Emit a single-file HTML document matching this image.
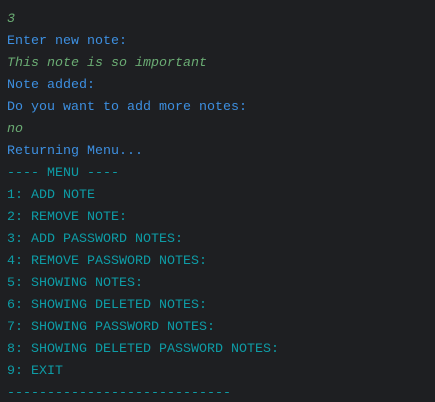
<!DOCTYPE html>
<html><head><meta charset="utf-8"><style>
html,body{margin:0;padding:0;background:#1e1f22;width:435px;height:402px;overflow:hidden}
pre{margin:0;padding:9px 0 0 7px;font-family:"Liberation Mono",monospace;font-size:13.33px;line-height:22px}
.g{color:#6aab73;font-style:italic}
.b{color:#3d8fe0}
.t{color:#0e9ca6}
</style></head><body><pre><span class="g">3</span>
<span class="b">Enter new note:</span>
<span class="g">This note is so important</span>
<span class="b">Note added:</span>
<span class="b">Do you want to add more notes:</span>
<span class="g">no</span>
<span class="b">Returning Menu...</span>
<span class="t">---- MENU ----</span>
<span class="t">1: ADD NOTE</span>
<span class="t">2: REMOVE NOTE:</span>
<span class="t">3: ADD PASSWORD NOTES:</span>
<span class="t">4: REMOVE PASSWORD NOTES:</span>
<span class="t">5: SHOWING NOTES:</span>
<span class="t">6: SHOWING DELETED NOTES:</span>
<span class="t">7: SHOWING PASSWORD NOTES:</span>
<span class="t">8: SHOWING DELETED PASSWORD NOTES:</span>
<span class="t">9: EXIT</span>
<span class="t">----------------------------</span></pre></body></html>
